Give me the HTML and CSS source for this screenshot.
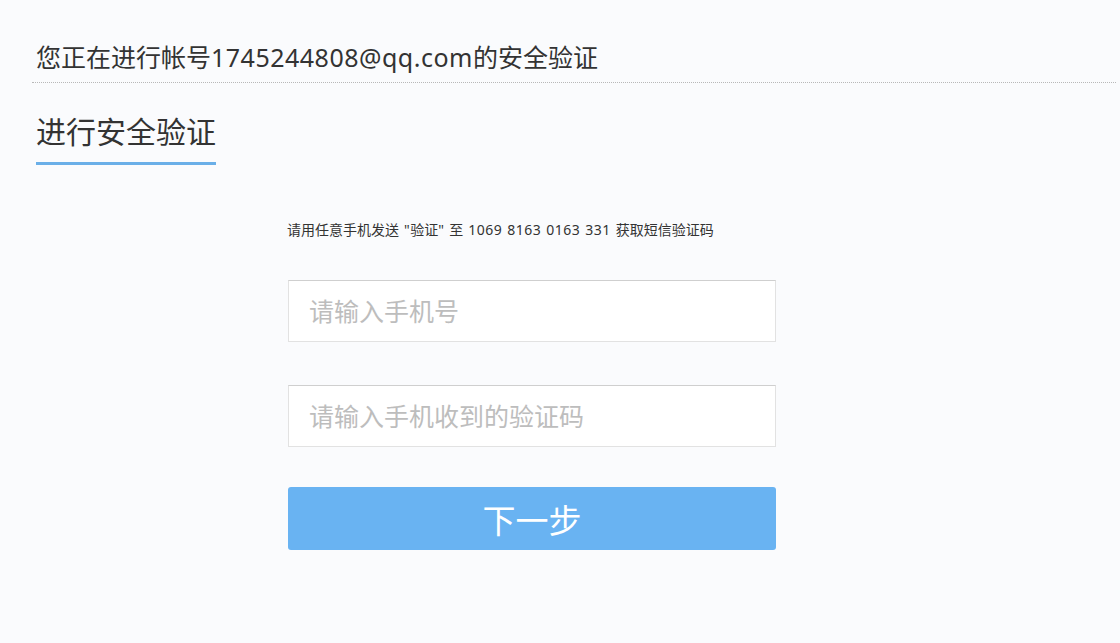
FILE: index.html
```html
<!DOCTYPE html>
<html lang="zh-CN">
<head>
<meta charset="utf-8">
<title>安全验证</title>
<link rel="stylesheet" href="styles.css">
</head>
<body>
<div class="page">
  <div class="account-bar">您正在进行帐号<span class="latin">1745244808@qq.com</span>的安全验证</div>
  <div class="section">
    <h2 class="section-title">进行安全验证</h2>
  </div>
  <form class="verify-form">
    <p class="hint">请用任意手机发送<span class="hint-latin"> "</span>验证<span class="hint-latin">" </span>至<span class="hint-latin"> 1069 8163 0163 331 </span>获取短信验证码</p>
    <input class="field" type="text" placeholder="请输入手机号">
    <input class="field" type="text" placeholder="请输入手机收到的验证码">
    <button class="submit" type="button">下一步</button>
  </form>
</div>
</body>
</html>
```
FILE: styles.css
```css
html, body {
  margin: 0;
  padding: 0;
  background: #fafbfd;
}
body {
  font-family: "Noto Sans", "Noto Sans CJK SC", sans-serif;
  color: #333;
  width: 1120px;
  height: 643px;
  overflow: hidden;
}
.page {
  padding-top: 40px;
}
.account-bar {
  margin: 0 4px 0 32px;
  padding-left: 4px;
  font-size: 25px;
  line-height: 34px;
  padding-bottom: 8px;
  border-bottom: 1px dotted #b8b8b8;
  color: #333;
}
.latin {
  letter-spacing: 0.5px;
}
.section {
  padding-left: 36px;
  padding-top: 31px;
}
.section-title {
  display: inline-block;
  margin: 0;
  font-size: 30px;
  font-weight: normal;
  line-height: 36px;
  padding-bottom: 12px;
  border-bottom: 3px solid #6aafe8;
  color: #333;
}
.verify-form {
  margin: 55px 0 0 288px;
  width: 488px;
  display: flex;
  flex-direction: column;
}
.hint {
  margin: 0 0 40px -1px;
  font-size: 14px;
  line-height: 20px;
  color: #333;
  white-space: nowrap;
}
.hint-latin {
  letter-spacing: 0.5px;
  word-spacing: 0.8px;
}
.field {
  box-sizing: border-box;
  width: 488px;
  height: 62px;
  margin: 0 0 43px 0;
  padding: 0 20px;
  border: 1px solid #e2e2e2;
  border-top-color: #cfcfcf;
  background: #fff;
  font-family: "Noto Sans", "Noto Sans CJK SC", sans-serif;
  font-size: 25px;
  color: #333;
  outline: none;
}
.field::placeholder {
  color: #bdbdbd;
}
.field:last-of-type {
  margin-bottom: 40px;
}
.submit {
  width: 488px;
  height: 63px;
  border: none;
  border-radius: 3px;
  background: #69b3f2;
  color: #fff;
  font-family: "Noto Sans", "Noto Sans CJK SC", sans-serif;
  font-size: 33px;
  cursor: pointer;
  padding: 0;
}
```
